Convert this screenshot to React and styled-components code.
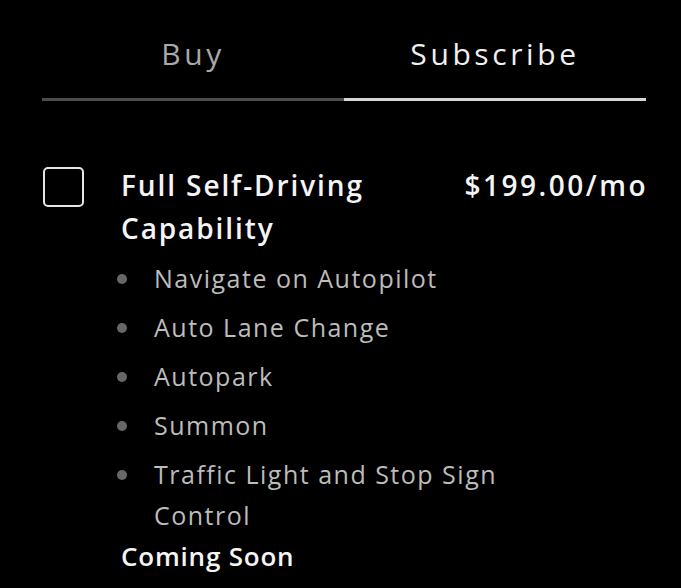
import React, { useState } from "react";
import styled, { createGlobalStyle } from "styled-components";

const GlobalStyle = createGlobalStyle`
    html, body {
        margin: 0;
        padding: 0;
        background: #000;
    }
    body {
        font-family: "Open Sans", "Liberation Sans", sans-serif;
        color: #fff;
    }
`;

const features = [
    "Navigate on Autopilot",
    "Auto Lane Change",
    "Autopark",
    "Summon",
    "Traffic Light and Stop Sign Control",
];

export default function App() {
    const [tab, setTab] = useState("subscribe");
    const [checked, setChecked] = useState(false);

    return (
        <Page>
            <GlobalStyle />
            <Tabs>
                <Tab active={tab === "buy"} onClick={() => setTab("buy")}>
                    Buy
                </Tab>
                <Tab active={tab === "subscribe"} onClick={() => setTab("subscribe")}>
                    Subscribe
                </Tab>
            </Tabs>
            <Option>
                <CheckBox checked={checked} onClick={() => setChecked(!checked)} />
                <Details>
                    <TitleRow>
                        <Title>Full Self-Driving Capability</Title>
                        <Price>$199.00/mo</Price>
                    </TitleRow>
                    <Features>
                        {features.map((f) => (
                            <Feature key={f}>{f}</Feature>
                        ))}
                    </Features>
                    <Soon>Coming Soon</Soon>
                </Details>
            </Option>
        </Page>
    );
}

const Page = styled.div`
    width: 604px;
    height: 588px;
    padding: 0 35px 0 42px;
    overflow: hidden;
`;

const Tabs = styled.div`
    display: grid;
    grid-template-columns: 1fr 1fr;
    padding-top: 33px;
`;

const Tab = styled.button`
    background: none;
    border: none;
    border-bottom: 3px solid ${(p) => (p.active ? "#d6d6d6" : "#4d4d4d")};
    color: ${(p) => (p.active ? "#f0f0f0" : "#a9a9a9")};
    font-family: inherit;
    font-size: 30px;
    font-weight: 500;
    letter-spacing: 3.6px;
    height: 68px;
    padding: 0 0 26px;
    cursor: pointer;
`;

const Option = styled.div`
    display: flex;
    margin-top: 66px;
`;

const CheckBox = styled.div`
    flex: 0 0 auto;
    width: 37px;
    height: 36px;
    border: 2px solid #e6e6e6;
    border-radius: 5px;
    margin-left: 1px;
    background: ${(p) => (p.checked ? "#e6e6e6" : "transparent")};
    cursor: pointer;
`;

const Details = styled.div`
    flex: 1;
    margin-left: 37px;
`;

const TitleRow = styled.div`
    display: flex;
    justify-content: space-between;
    align-items: flex-start;
`;

const Title = styled.div`
    width: 290px;
    font-size: 28px;
    font-weight: 600;
    letter-spacing: 1.9px;
    line-height: 43px;
    margin-top: -3px;
    color: #f4f4f4;
`;

const Price = styled.div`
    font-size: 28px;
    font-weight: 600;
    letter-spacing: 2.5px;
    margin-right: -2px;
    line-height: 43px;
    margin-top: -3px;
    color: #f4f4f4;
`;

const Features = styled.ul`
    list-style: none;
    margin: 8px 0 0;
    padding: 0;
`;

const Feature = styled.li`
    position: relative;
    padding-left: 33px;
    width: 367px;
    font-size: 25px;
    letter-spacing: 1.5px;
    line-height: 41px;
    margin-bottom: 8px;
    color: #bcbcbc;
    &::before {
        content: "";
        position: absolute;
        left: -4px;
        top: 16px;
        width: 10px;
        height: 10px;
        border-radius: 50%;
        background: #676767;
    }
`;

const Soon = styled.div`
    margin-top: -8px;
    font-size: 26px;
    font-weight: 600;
    letter-spacing: 0.8px;
    line-height: 41px;
    color: #f4f4f4;
`;
